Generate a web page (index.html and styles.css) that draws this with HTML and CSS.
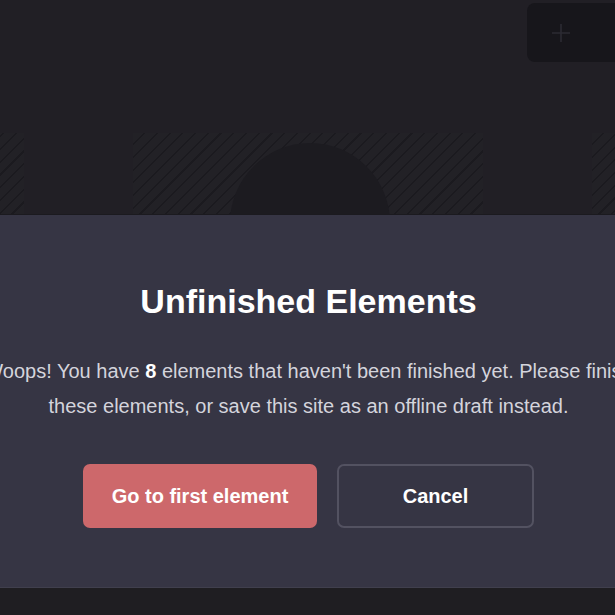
FILE: index.html
```html
<!DOCTYPE html>
<html lang="en">
<head>
<meta charset="utf-8">
<title>Unfinished Elements</title>
<link rel="stylesheet" href="styles.css">
</head>
<body>
<div class="page">
  <header class="topbar">
    <button class="add-btn" aria-label="Add">
      <svg width="20" height="20" viewBox="0 0 20 20" aria-hidden="true">
        <path d="M10 1v18M1 10h18" stroke="#2c2b33" stroke-width="1.6" fill="none"/>
      </svg>
    </button>
  </header>
  <section class="canvas">
    <div class="track">
      <div class="slot"></div>
      <div class="slot"></div>
      <div class="slot"></div>
    </div>
    <div class="avatar"></div>
  </section>
  <div class="modal">
    <h1 class="title">Unfinished Elements</h1>
    <p class="message">Woops! You have <strong>8</strong> elements that haven't been finished yet. Please finish these elements, or save this site as an offline draft instead.</p>
    <div class="actions">
      <button class="btn btn-primary">Go to first element</button>
      <button class="btn btn-outline">Cancel</button>
    </div>
  </div>
  <footer class="bottom"></footer>
</div>
</body>
</html>
```

FILE: styles.css
```css
* { box-sizing: border-box; }
html, body {
  margin: 0;
  padding: 0;
  width: 615px;
  height: 615px;
  overflow: hidden;
  background: #211f25;
  font-family: "Liberation Sans", Arial, Helvetica, sans-serif;
}
.page {
  display: flex;
  flex-direction: column;
  width: 615px;
  height: 615px;
}
.topbar {
  height: 133px;
  flex: none;
  display: flex;
  justify-content: flex-end;
  align-items: flex-start;
  padding-top: 3px;
  overflow: hidden;
}
.add-btn {
  width: 110px;
  height: 59px;
  margin-right: -22px;
  border: none;
  border-radius: 8px;
  background: #17161b;
  display: flex;
  align-items: center;
  padding: 0 0 0 24px;
}
.add-btn svg { display: block; }
.canvas {
  position: relative;
  height: 82px;
  flex: none;
  overflow: hidden;
  border-bottom: 1px solid #1b1a1f;
}
.track {
  display: flex;
  justify-content: center;
  gap: 109px;
  width: 615px;
  height: 100%;
}
.slot {
  flex: none;
  width: 350px;
  height: 100%;
  background: repeating-linear-gradient(135deg, #222126 0, #222126 7.5px, #1b1a1f 7.5px, #1b1a1f 9px);
}
.avatar {
  position: absolute;
  left: 230px;
  top: 10px;
  width: 160px;
  height: 160px;
  border-radius: 50%;
  background: #1c1b20;
}
.modal {
  height: 373px;
  flex: none;
  background: #363544;
  border-bottom: 1px solid #403f4d;
  display: flex;
  flex-direction: column;
  align-items: center;
  padding-top: 67px;
}
.title {
  margin: 0;
  font-size: 34px;
  line-height: 39px;
  font-weight: 700;
  color: #ffffff;
  transform: translateX(1px);
}
.message {
  margin: 33px 0 0;
  width: 680px;
  flex: none;
  text-align: center;
  font-size: 20px;
  line-height: 35px;
  color: #d4d4dc;
  transform: translateX(1px);
}
.message strong { color: #ffffff; }
.actions {
  display: flex;
  gap: 20px;
  margin-top: 40px;
  transform: translateX(1px);
}
.btn {
  height: 64px;
  border-radius: 7px;
  font-family: inherit;
  font-size: 20px;
  font-weight: 700;
  color: #ffffff;
  cursor: pointer;
}
.btn-primary {
  width: 234px;
  border: none;
  background: #cd686b;
}
.btn-outline {
  width: 197px;
  background: transparent;
  border: 2px solid #535261;
}
.bottom {
  flex: 1;
  background: #1f1e22;
}
```
